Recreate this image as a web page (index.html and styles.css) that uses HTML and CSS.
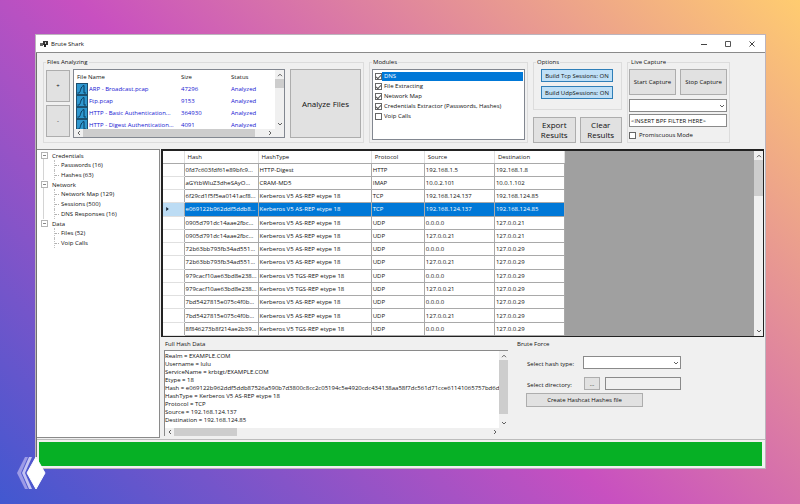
FILE: index.html
```html
<!DOCTYPE html>
<html lang="en">
<head>
<meta charset="utf-8">
<title>Brute Shark</title>
<link rel="stylesheet" href="styles.css">
</head>
<body>
<svg class="defs" aria-hidden="true">
  <symbol id="up" viewBox="0 0 8 8"><path d="M2 5.2 4 3.2 6 5.2" fill="none" stroke="#606060"/></symbol>
  <symbol id="down" viewBox="0 0 8 8"><path d="M2 3 4 5 6 3" fill="none" stroke="#606060"/></symbol>
  <symbol id="left" viewBox="0 0 8 8"><path d="M5 2 3 4 5 6" fill="none" stroke="#606060"/></symbol>
  <symbol id="right" viewBox="0 0 8 8"><path d="M3 2 5 4 3 6" fill="none" stroke="#606060"/></symbol>
  <symbol id="pcap" viewBox="0 0 12 12"><path d="M0 0h12v12H0z" fill="#1d4f6e"/><path d="M1 1h10v10H1z" fill="#2f97cf"/><path d="M1.500 10H3C5 9 4 3.500 8 2.500V10h2" fill="none" stroke="#0b3a5c"/></symbol>
</svg>
<div class="window">
  <header class="titlebar">
    <svg class="app-icon" viewBox="0 0 8 8"><path d="M3 1h5v4H3z" fill="#333"/><path d="M0 3h3v3H0z" fill="#666"/><path d="M4 4h2v3H4z" fill="#222"/><path d="M5 2h1v2H5z" fill="#ccc"/></svg>
    <h1>Brute Shark</h1>
    <div class="caption">
      <button aria-label="Minimize"><svg viewBox="0 0 8 8"><path d="M1 4.500h6" stroke="#444"/></svg></button>
      <button aria-label="Maximize"><svg viewBox="0 0 8 8"><path d="M1.500 1.500h5v5h-5z" fill="none" stroke="#555"/></svg></button>
      <button aria-label="Close"><svg viewBox="0 0 8 8"><path d="m1.500 1.500 5 5m0-5-5 5" stroke="#444"/></svg></button>
    </div>
  </header>
  <div class="client">
    <div class="toolbar">
      <fieldset class="files-group">
        <legend>Files Analyzing</legend>
        <div class="files-body">
          <div class="stack">
            <button class="btn">+</button>
            <button class="btn">-</button>
          </div>
          <div class="file-list">
            <div class="scroll-row">
              <div class="file-clip">
                <table>
                  <colgroup><col class="c-name"><col class="c-size"><col></colgroup>
                  <thead><tr><th>File Name</th><th>Size</th><th>Status</th></tr></thead>
                  <tbody>
                    <tr><td><svg><use href="#pcap"/></svg>ARP - Broadcast.pcap</td><td>47296</td><td>Analyzed</td></tr>
                    <tr><td><svg><use href="#pcap"/></svg>Ftp.pcap</td><td>9153</td><td>Analyzed</td></tr>
                    <tr><td><svg><use href="#pcap"/></svg>HTTP - Basic Authentication...</td><td>364930</td><td>Analyzed</td></tr>
                    <tr><td><svg><use href="#pcap"/></svg>HTTP - Digest Authentication...</td><td>4091</td><td>Analyzed</td></tr>
                  </tbody>
                </table>
              </div>
              <div class="vbar"><svg><use href="#up"/></svg><div class="track"><i class="thumb thumb-files"></i></div><svg><use href="#down"/></svg></div>
            </div>
            <div class="hbar"><svg><use href="#left"/></svg><div class="track"><i class="thumb thumb-files-h"></i></div><svg><use href="#right"/></svg></div>
          </div>
          <button class="btn big analyze">Analyze Files</button>
        </div>
      </fieldset>
      <fieldset class="modules-group">
        <legend>Modules</legend>
        <div class="modules">
          <label class="selected"><input type="checkbox" checked><span>DNS</span></label>
          <label><input type="checkbox" checked><span>File Extracting</span></label>
          <label><input type="checkbox" checked><span>Network Map</span></label>
          <label><input type="checkbox" checked><span>Credentials Extractor (Passwords, Hashes)</span></label>
          <label><input type="checkbox"><span>Voip Calls</span></label>
        </div>
      </fieldset>
      <div class="options-col">
        <fieldset class="options-group">
          <legend>Options</legend>
          <div class="toggles">
            <button class="btn toggle">Build Tcp Sessions: ON</button>
            <button class="btn toggle">Build UdpSessions: ON</button>
          </div>
        </fieldset>
        <div class="results">
          <button class="btn big">Export Results</button>
          <button class="btn big">Clear Results</button>
        </div>
      </div>
      <fieldset class="live-group">
        <legend>Live Capture</legend>
        <div class="live">
          <div class="capture">
            <button class="btn">Start Capture</button>
            <button class="btn">Stop Capture</button>
          </div>
          <div class="combo"><select aria-label="Network interface"><option></option></select><svg><use href="#down"/></svg></div>
          <input class="text" type="text" aria-label="BPF filter" value="&lt;INSERT BPF FILTER HERE&gt;">
          <label class="check"><input type="checkbox"><span>Promiscuous Mode</span></label>
        </div>
      </fieldset>
    </div>
    <div class="main">
      <nav class="tree">
        <ul>
          <li><span class="node">Credentials</span><ul><li>Passwords (16)</li><li>Hashes (63)</li></ul></li>
          <li><span class="node">Network</span><ul><li>Network Map (129)</li><li>Sessions (500)</li><li>DNS Responses (16)</li></ul></li>
          <li><span class="node">Data</span><ul><li>Files (52)</li><li>Voip Calls</li></ul></li>
        </ul>
      </nav>
      <div class="content">
        <div class="grid-view">
          <table class="hashes">
            <colgroup><col class="g-mark"><col class="g-hash"><col class="g-type"><col class="g-proto"><col class="g-addr"><col class="g-addr"></colgroup>
            <thead><tr><th></th><th>Hash</th><th>HashType</th><th>Protocol</th><th>Source</th><th>Destination</th></tr></thead>
            <tbody>
              <tr><td></td><td>0fd7c603fdf61e89bfc9...</td><td>HTTP-Digest</td><td>HTTP</td><td>192.168.1.5</td><td>192.168.1.8</td></tr>
              <tr><td></td><td>aGYtbWluZ3dheSAyO...</td><td>CRAM-MD5</td><td>IMAP</td><td>10.0.2.101</td><td>10.0.1.102</td></tr>
              <tr><td></td><td>6f29cd1f5f5ea0141acf8...</td><td>Kerberos V5 AS-REP etype 18</td><td>TCP</td><td>192.168.124.137</td><td>192.168.124.85</td></tr>
              <tr class="current"><td><svg viewBox="0 0 4 6"><path d="M0 0 4 3 0 6z" fill="#123"/></svg></td><td>e069122b962ddf5ddb8...</td><td>Kerberos V5 AS-REP etype 18</td><td>TCP</td><td>192.168.124.137</td><td>192.168.124.85</td></tr>
              <tr><td></td><td>0905d791dc14aae2fbc...</td><td>Kerberos V5 AS-REP etype 18</td><td>UDP</td><td>0.0.0.0</td><td>127.0.0.21</td></tr>
              <tr><td></td><td>0905d791dc14aae2fbc...</td><td>Kerberos V5 AS-REP etype 18</td><td>UDP</td><td>127.0.0.21</td><td>127.0.0.21</td></tr>
              <tr><td></td><td>72b63bb793fb34ad551...</td><td>Kerberos V5 AS-REP etype 18</td><td>UDP</td><td>0.0.0.0</td><td>127.0.0.29</td></tr>
              <tr><td></td><td>72b63bb793fb34ad551...</td><td>Kerberos V5 AS-REP etype 18</td><td>UDP</td><td>127.0.0.21</td><td>127.0.0.29</td></tr>
              <tr><td></td><td>979cacf10ae63bd8e238...</td><td>Kerberos V5 TGS-REP etype 18</td><td>UDP</td><td>0.0.0.0</td><td>127.0.0.29</td></tr>
              <tr><td></td><td>979cacf10ae63bd8e238...</td><td>Kerberos V5 TGS-REP etype 18</td><td>UDP</td><td>127.0.0.21</td><td>127.0.0.29</td></tr>
              <tr><td></td><td>7bd5427815e075c4f0b...</td><td>Kerberos V5 AS-REP etype 18</td><td>UDP</td><td>0.0.0.0</td><td>127.0.0.29</td></tr>
              <tr><td></td><td>7bd5427815e075c4f0b...</td><td>Kerberos V5 AS-REP etype 18</td><td>UDP</td><td>127.0.0.21</td><td>127.0.0.29</td></tr>
              <tr><td></td><td>8f846273b8f214ae2b39...</td><td>Kerberos V5 TGS-REP etype 18</td><td>UDP</td><td>0.0.0.0</td><td>127.0.0.29</td></tr>
            </tbody>
          </table>
          <div class="vbar"><svg><use href="#up"/></svg><div class="track"><i class="thumb thumb-grid"></i></div><svg><use href="#down"/></svg></div>
        </div>
        <div class="details">
          <section class="hash-data">
            <label for="full">Full Hash Data</label>
            <div class="memo">
              <div class="scroll-row">
                <textarea id="full" readonly wrap="off">Realm = EXAMPLE.COM
Username = lulu
ServiceName = krbtgt/EXAMPLE.COM
Etype = 18
Hash = e069122b962ddf5ddb87526a590b7d3800c8cc2c05194c5e4920cdc434138aa58f7dc561d71cce61141065757bd6db9
HashType = Kerberos V5 AS-REP etype 18
Protocol = TCP
Source = 192.168.124.137
Destination = 192.168.124.85</textarea>
                <div class="vbar"><svg><use href="#up"/></svg><div class="track"><i class="thumb thumb-memo"></i></div><svg><use href="#down"/></svg></div>
              </div>
              <div class="hbar memo-hbar"><svg><use href="#left"/></svg><div class="track"><i class="thumb thumb-memo-h"></i></div><svg><use href="#right"/></svg></div>
            </div>
          </section>
          <section class="brute">
            <h2>Brute Force</h2>
            <div class="form">
              <label for="type">Select hash type:</label>
              <div class="combo"><select id="type"><option></option></select><svg><use href="#down"/></svg></div>
              <label for="dir">Select directory:</label>
              <div class="pick"><button class="btn">...</button><input class="text" id="dir" type="text" readonly></div>
            </div>
            <button class="btn create">Create Hashcat Hashes file</button>
          </section>
        </div>
      </div>
    </div>
    <footer><progress value="100" max="100" aria-label="Analysis progress"></progress></footer>
  </div>
</div>
<svg class="mark" viewBox="0 0 30 34"><path d="M9 1 1 17l8 16h3L5 17l7-16z" fill="#9d9be6"/><path d="M13 1 6 17l7 16h3L9 17l7-16z" fill="#c4c3f2"/><path d="M20 1 11 17l9 16 9-16z" fill="#fff" stroke="#fff" stroke-linejoin="round"/></svg>
</body>
</html>
```
FILE: styles.css
```css
* { box-sizing: border-box; }

body {
  margin: 0;
  min-height: 100vh;
  padding: 34px 34px 35px 35px;
  display: flex;
  background: linear-gradient(43deg, #4158d0 0%, #c850c0 46%, #ffcc70 100%);
  color: #101010;
  font: 6px/8px "Open Sans", sans-serif;
}

button, input, select, textarea { font: inherit; color: inherit; margin: 0; border-radius: 0; }
h1, h2 { margin: 0; font: inherit; }
table { border-collapse: collapse; table-layout: fixed; }
th { font-weight: normal; text-align: left; }
.defs { display: none; }

.window {
  flex: 1;
  min-width: 0;
  display: flex;
  flex-direction: column;
  border: 1px solid #bdb4bd;
  background: #f0f0f0;
}

.titlebar {
  display: flex;
  align-items: center;
  gap: 3px;
  height: 18px;
  padding: 0 5px 0 4px;
  background: #fff;
  border-bottom: 1px solid #8a8a8a;
}
.app-icon { width: 8px; height: 8px; }
.caption { margin-left: auto; display: flex; gap: 8px; }
.caption button { width: 16px; height: 16px; padding: 4px; border: 0; background: none; }
.caption svg { display: block; width: 8px; height: 8px; }

.client {
  flex: 1;
  display: flex;
  flex-direction: column;
  border-left: 1px solid #707070;
}

.toolbar { display: flex; align-items: stretch; gap: 5px; padding: 5px 6px 6px; height: 96px; }

fieldset { margin: 0; padding: 0; min-width: 0; border: 1px solid #dcdcdc; }
legend { height: 8px; margin-left: 2px; padding: 0 1px; }

.files-group { flex: 0 0 321px; }
.modules-group { flex: 0 0 159px; }
.options-col { flex: 0 0 89px; display: flex; flex-direction: column; justify-content: space-between; }
.live-group { flex: 0 0 103px; }

.btn { padding: 0; border: 1px solid #adadad; background: #e1e1e1; text-align: center; }
.big { font-size: 8px; line-height: 10px; }

.files-body { display: flex; gap: 3px; padding: 3px 2px; height: 75px; }
.stack { display: flex; flex-direction: column; gap: 3px; width: 24px; padding: 1px 0; }
.stack .btn { flex: 1; }
.file-list { flex: 1; display: flex; flex-direction: column; border: 1px solid #828790; background: #fff; min-width: 0; }
.analyze { width: 71px; margin-left: 2px; }

.scroll-row { flex: 1; display: flex; min-height: 0; }
.file-clip { flex: 1; overflow: hidden; color: #1414d2; }
.file-clip table { width: 100%; }
.file-clip th { height: 13px; padding: 0 3px; color: #101010; }
.file-clip td { height: 12px; padding: 0 3px; white-space: nowrap; }
.file-clip td svg { width: 12px; height: 12px; margin-right: 1px; vertical-align: middle; }
.file-clip td:first-child { padding: 0 2px; }
.c-name { width: 104px; }
.c-size { width: 50px; }

.vbar { width: 9px; display: flex; flex-direction: column; align-items: center; padding: 1px 0; background: #f0f0f0; }
.hbar { height: 8px; display: flex; align-items: center; padding: 0 1px; background: #f0f0f0; }
.vbar svg, .hbar svg { flex: none; width: 8px; height: 8px; }
.track { flex: 1; align-self: stretch; display: flex; }
.thumb { background: #cdcdcd; }
.vbar .thumb { width: 100%; }
.hbar .thumb { height: 100%; }
.thumb-files { height: 9px; }
.thumb-files-h { width: 94%; }
.file-list .hbar { padding-right: 10px; }
.thumb-grid { height: 36px; }
.thumb-memo { height: 92%; }
.thumb-memo-h { width: 63px; }
.memo-hbar { padding-right: 9px; }

.modules { height: 71px; margin: 3px 2px; padding: 1px; border: 1px solid #828790; background: #fff; }
.modules label { display: flex; align-items: center; height: 10px; }
.modules span { flex: 1; padding-left: 2px; line-height: 9px; }
.modules .selected span { color: #fff; background: #0078d7; }

input[type="checkbox"] { appearance: none; flex: none; width: 7px; height: 7px; border: 1px solid #666; background: #fff; display: grid; place-items: center; }
input[type="checkbox"]:checked::before { content: ""; width: 4px; height: 2px; border: solid #555; border-width: 0 0 1px 1px; transform: rotate(-45deg); }
.modules input { margin: 0 0 0 1px; }

.options-group { height: 52px; }
.toggles { display: flex; flex-direction: column; gap: 4px; padding: 3px 8px 0 7px; }
.toggle { height: 13px; border-color: #2f7fb8; background: #bfe0f7; }
.results { display: flex; gap: 4px; }
.results .btn { flex: 1; height: 26px; }

.live { display: flex; flex-direction: column; gap: 2px; padding: 3px 2px 0 1px; }
.capture { display: flex; gap: 4px; margin-bottom: 2px; }
.capture .btn { flex: 1; height: 26px; }
.combo { position: relative; }
.combo select, .text { display: block; width: 100%; height: 13px; padding: 0 1px; border: 1px solid #8a8a8a; background: #fff; appearance: none; }
.combo svg { position: absolute; right: 1px; top: 3px; width: 8px; height: 8px; pointer-events: none; }
.check { display: flex; align-items: center; gap: 3px; height: 12px; }

.main { flex: 1; display: flex; gap: 1px; min-height: 0; }
.tree { flex: 0 0 123px; padding: 1px 4px; border: solid #8a8a8a; border-width: 1px 1px 1px 0; background: #fff; }
.tree ul { list-style: none; margin: 0; padding: 0; }
.node { display: flex; align-items: center; height: 9px; gap: 4px; }
.node::before { content: ""; width: 5px; height: 5px; border: 1px solid #b4b4b4; background: linear-gradient(#888, #888) center / 3px 1px no-repeat; }
.tree > ul > li { background: linear-gradient(#d4d4d4, #d4d4d4) 2px 8px / 1px 100% no-repeat; }
.tree > ul > li:last-child { background: none; }
.tree ul ul { margin-left: 13px; }
.tree ul ul li { display: flex; align-items: center; gap: 2px; height: 10px; border-left: 1px dotted #c0c0c0; }
.tree ul ul li::before { content: ""; width: 4px; border-top: 1px dotted #b0b0b0; }

.content { flex: 1; display: flex; flex-direction: column; min-width: 0; margin-right: 1px; }
.grid-view { display: flex; justify-content: space-between; height: 188px; border: 1px solid #222; border-width: 2px 1px 1px 2px; background: #a0a0a0; }
.hashes { width: 402px; height: 185px; background: #fff; }
.g-mark { width: 21px; }
.g-hash { width: 74px; }
.g-type { width: 113px; }
.g-proto { width: 53px; }
.g-addr { width: 70px; }
.hashes td, .hashes th { padding: 0 1px; border: 1px solid #a9a9a9; border-width: 0 1px 1px 0; white-space: nowrap; overflow: hidden; }
.hashes th { height: 12px; padding: 0 3px; border-right-color: #e0e0e0; }
.hashes td:first-child { border-bottom-color: #e0e0e0; padding-left: 3px; }
.hashes td svg { display: block; width: 3px; height: 4px; }
.current td { background: #0078d7; color: #fff; }
.current td:first-child { background: #bcdcf4; }

.details { flex: 1; display: flex; padding: 3px 3px 2px 3px; gap: 9px; }
.hash-data { flex: 0 0 344px; display: flex; flex-direction: column; }
.hash-data label, .brute h2 { height: 10px; }
.hash-data label { padding-left: 1px; }
.memo { flex: 1; display: flex; flex-direction: column; border: 1px solid #8a8a8a; border-width: 1px 0 0 1px; background: #fff; }
.memo textarea { flex: 1; min-width: 0; padding: 1px 0; border: 0; background: #fff; resize: none; overflow: hidden; white-space: pre; }

.brute { flex: 1; }
.form { display: grid; grid-template-columns: 56px 98px; row-gap: 8px; align-items: end; padding: 6px 9px 3px 10px; }
.form label { line-height: 10px; }
.pick { display: flex; gap: 5px; padding-left: 1px; }
.pick .btn { width: 16px; height: 13px; }
.pick .text { flex: 1; min-width: 0; background: #f0f0f0; }
.create { width: 117px; height: 14px; margin-left: 9px; }

footer { padding: 4px 3px 2px 2px; background: linear-gradient(#bcbcbc, #bcbcbc) 0 1px / 100% 1px no-repeat; }
progress { appearance: none; display: block; width: 100%; height: 24px; border: 0; background: #e6e6e6; }
progress::-webkit-progress-bar { background: #e6e6e6; }
progress::-webkit-progress-value { background: #06b025; }

.mark { position: absolute; left: 16px; bottom: 14px; width: 30px; height: 34px; }
```
